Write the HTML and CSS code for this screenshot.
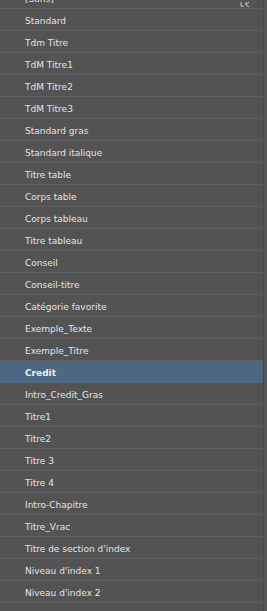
FILE: index.html
```html
<!DOCTYPE html>
<html lang="fr">

<head>
    <meta charset="UTF-8">
    <title>Styles de paragraphe</title>
    <link rel="stylesheet" href="styles.css">
</head>

<body>
    <div class="panel">
        <ul class="style-list">
            <li class="row">[Sans]
                <svg class="row-icon" width="10" height="6" viewBox="0 0 10 6">
                    <path d="M1 0 L1 4 L4 4 M6 0 L6 3 L9 0 M6 3 L9 5" stroke="#c8c8c8" stroke-width="1" fill="none" />
                </svg>
            </li>
            <li class="row">Standard</li>
            <li class="row">Tdm Titre</li>
            <li class="row">TdM Titre1</li>
            <li class="row">TdM Titre2</li>
            <li class="row">TdM Titre3</li>
            <li class="row">Standard gras</li>
            <li class="row">Standard italique</li>
            <li class="row">Titre table</li>
            <li class="row">Corps table</li>
            <li class="row">Corps tableau</li>
            <li class="row">Titre tableau</li>
            <li class="row">Conseil</li>
            <li class="row">Conseil-titre</li>
            <li class="row">Catégorie favorite</li>
            <li class="row">Exemple_Texte</li>
            <li class="row">Exemple_Titre</li>
            <li class="row selected">Credit</li>
            <li class="row">Intro_Credit_Gras</li>
            <li class="row">Titre1</li>
            <li class="row">Titre2</li>
            <li class="row">Titre 3</li>
            <li class="row">Titre 4</li>
            <li class="row">Intro-Chapitre</li>
            <li class="row">Titre_Vrac</li>
            <li class="row">Titre de section d'index</li>
            <li class="row">Niveau d'index 1</li>
            <li class="row">Niveau d'index 2</li>
        </ul>
        <div class="scroll-edge"></div>
    </div>
</body>

</html>
```

FILE: styles.css
```css
body {
    margin: 0;
    background-color: #535353;
    font-family: Tahoma, "DejaVu Sans", sans-serif;
    overflow: hidden;
}

.panel {
    display: flex;
    align-items: flex-start;
    height: 611px;
    overflow: hidden;
}

.style-list {
    list-style-type: none;
    margin: -13px 0 0 0;
    padding: 0;
    width: 263px;
}

.row {
    position: relative;
    height: 19px;
    padding-top: 2px;
    line-height: 21px;
    border-bottom: 1px solid #5e5e5e;
    padding-left: 25px;
    font-size: 9px;
    color: #e4e4e4;
    white-space: nowrap;
}

/* geselecteerde stijl */
.row.selected {
    background-color: #4c6782;
    font-weight: bold;
    color: #f2f2f2;
    border-bottom-color: #4c6782;
}

.row-icon {
    position: absolute;
    right: 13px;
    bottom: 0;
}

.scroll-edge {
    width: 3px;
    height: 611px;
    border-left: 1px solid #474747;
    background-color: #555555;
}
```
